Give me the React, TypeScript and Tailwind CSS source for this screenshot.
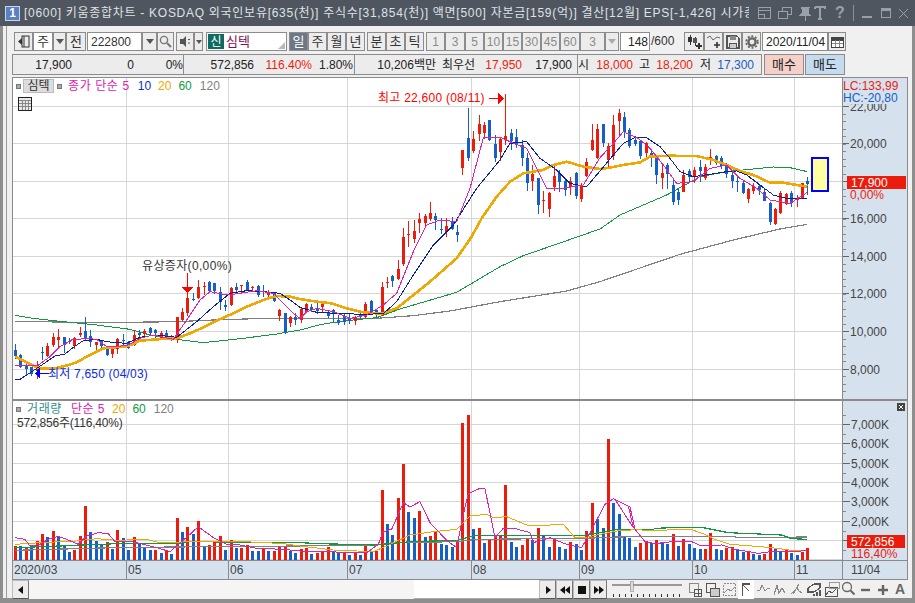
import React from "react";
import { twMerge } from "tailwind-merge";

type Candle = [number, number, number, number, number];
type P = [number, number];

const RED = "#ec1c0c";
const BLUE = "#1560c8";
const candleX = (i: number) => Math.round(15 + 5.39 * i);

// [red?, body top, body bottom, wick top, wick bottom], read off 3x crops
const c1: Candle[] = [
  [0,300,318,282,328],[0,315,350,312,355],[0,348,356,335,375],[0,352,372,352,378],[1,345,362,332,385],[0,305,308,292,332],
  [1,288,318,278,320],[1,262,285,248,290],[1,262,270,238,295],[0,262,285,262,310],[0,272,276,265,282],[1,265,288,262,298],
  [1,249,254,232,262],[0,243,268,200,270],[0,258,275,240,292],[1,277,286,277,300],[0,272,288,270,295],[0,295,315,290,318],
  [1,298,312,298,326],[1,268,298,265,312],[0,270,274,252,285],[0,278,292,272,295],[1,255,285,240,288],[0,250,256,240,270],
  [1,242,252,236,256],[0,235,250,232,258],[0,240,250,238,265],[1,248,262,242,268],[0,250,262,240,270],[1,257,264,255,272],
  [1,202,272,200,278],[1,185,210,173,213],[1,145,190,130,198],[0,146,150,130,155],[1,112,145,90,148],[1,108,112,95,135],
  [0,95,122,92,125],[0,100,125,98,132],[0,125,155,112,182],[0,165,170,150,182],[1,115,165,112,168],[0,110,118,100,132],
  [1,105,108,104,130],[0,95,120,90,122],[1,112,116,108,125],[0,108,135,105,140],[0,122,125,105,142],[1,125,135,120,145],
  [0,128,152,125,155],[1,180,198,178,215],[0,190,248,188,250],[1,200,218,198,230],[0,202,212,188,225],
];
const c2: Candle[] = [
  [1,672,705,668,712],[1,657,682,655,685],[0,665,675,658,682],[0,668,678,650,686],[1,656,665,650,682],[0,682,695,678,700],
  [0,675,687,672,710],[0,705,715,690,720],[0,692,710,686,720],[0,700,710,686,715],[1,695,708,692,720],[0,686,695,680,700],
  [1,657,695,650,698],[0,648,680,646,682],[0,676,692,672,698],[1,605,688,590,692],[1,591,594,575,607],[0,574,590,570,605],
  [1,552,582,525,585],[1,456,538,430,545],[1,447,450,408,485],[1,437,460,405,475],[1,402,415,385,445],[1,393,413,388,430],
  [1,383,400,350,408],[0,393,405,385,435],[0,432,435,398,445],[1,423,442,400,458],[0,408,432,395,435],[0,441,449,420,470],
  [1,195,250,195,270],[0,158,218,68,228],[1,162,197,138,205],[1,117,147,90,168],[1,120,143,110,160],[0,105,165,105,168],
  [0,177,218,150,230],[1,162,200,155,228],[1,154,165,28,180],[0,145,168,132,195],[0,157,180,132,188],[0,180,218,165,242],
  [0,220,296,205,318],[1,268,288,240,318],[0,278,360,278,387],[1,345,349,318,385],[1,323,370,320,395],[1,273,307,235,318],
  [0,265,292,255,320],[0,288,315,285,333],[1,288,305,275,330],[0,263,333,260,340],[1,303,342,295,352],[1,232,275,220,278],
  [1,165,195,118,198],[1,132,218,118,222],
  [0,118,175,118,188],[1,183,225,175,250],[1,120,212,90,225],[1,85,108,72,152],[0,95,140,80,158],[0,135,183,128,188],
  [0,165,178,152,182],[0,168,212,168,222],[1,175,205,170,218],[0,205,218,195,245],[0,215,270,212,295],[1,265,280,240,312],
  [0,240,268,235,312],[0,300,352,285,360],[0,322,345,310,360],[1,270,320,255,322],[0,258,275,252,295],[1,255,275,245,292],
  [0,245,258,225,290],[1,247,280,238,285],[1,216,222,192,240],[0,212,232,210,240],[0,220,245,212,250],[0,238,268,235,280],
  [0,270,288,262,310],[0,288,292,270,320],[0,295,325,285,328],[1,313,342,310,356],[1,303,318,295,328],[0,303,315,298,330],
  [0,320,347,310,350],[0,355,412,350,418],[1,372,418,370,420],[1,325,385,318,388],[1,327,357,325,360],[0,325,355,318,365],
  [1,343,346,330,365],[1,295,340,293,342],[0,288,296,275,328],
];
const candles: Candle[] = [
  ...c1.map((c) => c.map((v, i) => (i === 0 ? v : 250 + v / 3)) as Candle),
  ...c2.map((c) => c.map((v, i) => (i === 0 ? v : 85 + v / 3)) as Candle),
];

const vol3: [number, number][] = [
  [1,465],[0,465],[1,467],[0,465],[1,450],[1,430],[0,438],[1,420],[0,435],[0,463],[0,483],[1,477],[1,435],[1,345],[0,423],[0,450],[0,458],[1,453],
  [0,474],[1,417],[0,441],[0,477],[1,438],[0,458],[0,470],[0,477],[1,477],[0,485],[1,480],[0,489],[1,381],[0,423],[1,408],[0,429],[1,390],
  [0,467],[1,462],[1,450],[1,435],[0,477],[1,447],[0,471],[1,471],[1,462],[0,480],[0,480],[1,474],[0,480],[1,479],[1,465],[1,465],[0,480],[0,485],
];
const vol8: [number, number][] = [
  [1,445],[1,440],[0,458],[1,456],[1,452],[1,438],[0,452],[0,452],[1,452],[0,461],[1,455],[0,461],[1,435],[0,450],[1,450],[1,267],[0,369],[0,402],
  [1,291],[1,189],[0,333],[0,351],[1,330],[0,408],[1,405],[1,393],[0,429],[0,432],[0,438],[1,423],[1,66],[1,42],[0,384],[1,381],[0,426],[1,417],
  [1,405],[1,405],[1,252],[0,423],[0,438],[1,432],[1,414],[0,417],[1,381],[0,405],[0,438],[1,414],[0,438],[0,444],[1,423],[0,429],[0,447],[1,390],
  [1,306],[0,354],[0,381],[1,114],[0,306],[0,339],[0,408],[0,411],[0,438],
];
const vol4: [number, number][] = [
  [1,456],[1,450],[0,456],[1,447],[0,453],[0,459],[1,429],[0,465],[1,444],[0,459],[0,471],[0,474],[1,474],[1,426],[0,474],[0,477],[1,471],[1,468],
  [0,477],[0,483],[1,483],[0,489],[0,492],[1,489],[1,459],[0,471],[0,480],[1,478],[0,486],[0,492],[1,482],[1,471],
];
const volumes = [
  ...vol3.map(([c, y]) => [c, (507 - y) / 3]),
  ...vol8.map(([c, y]) => [c, (477 - y) / 3]),
  ...vol4.map(([c, y]) => [c, (507 - y) / 3]),
];

const pts = (ox: number, oy: number, a: P[]) => a.map(([x, y]) => `${ox + x / 3},${oy + y / 3}`).join(" ");
const Z5 = [0, 250] as const;
const Z6 = [300, 85] as const;
const Z7 = [600, 85] as const;
const Z3 = [0, 390] as const;
const Z8 = [300, 400] as const;
const Z4 = [615, 390] as const;

const line = (...parts: [readonly [number, number], P[]][]) => parts.map(([z, a]) => pts(z[0], z[1], a)).join(" ");

const ma5 = line(
  [Z5, [[46,345],[80,345],[115,345],[150,320],[180,290],[215,270],[260,265],[290,268],[320,290],[350,290],[385,285],[420,265],[460,255],[520,268],[560,210],[600,150],[630,125],[680,135],[720,130],[770,122],[820,130],[850,160],[880,190],[900,205]]],
  [Z6, [[20,680],[50,670],[100,680],[150,700],[200,690],[250,660],[290,625],[340,500],[380,420],[420,405],[470,410],[510,310],[550,158],[600,156],[640,175],[680,190],[710,250],[740,310],[790,310],[850,300],[900,218]]],
  [Z7, [[40,175],[70,140],[115,160],[150,190],[190,240],[230,295],[280,290],[330,250],[380,240],[420,280],[470,310],[510,345],[570,355],[622,322]]],
);
const ma10 = line(
  [Z5, [[46,388],[60,388],[85,372],[115,352],[140,335],[165,318],[195,312],[220,292],[250,272],[290,268],[320,275],[350,278],[380,280],[420,262],[470,255],[530,262],[590,215],[640,170],[690,130],[740,122],[790,125],[840,130],[870,150],[900,172]]],
  [Z6, [[50,682],[130,686],[190,688],[250,686],[290,650],[340,570],[400,480],[460,420],[530,310],[600,225],[630,175],[680,170],[720,220],[770,255],[810,295],[860,305],[900,258]]],
  [Z7, [[40,210],[70,175],[105,157],[140,158],[180,185],[210,220],[240,260],[280,275],[330,268],[380,260],[410,258],[440,270],[480,300],[520,330],[560,340],[622,340]]],
);
const ma20 = line(
  [Z5, [[46,320],[75,335],[105,350],[125,356],[160,356],[195,348],[230,337],[260,320],[290,305],[310,295],[345,292],[385,288],[420,272],[470,268],[530,265],[570,250],[610,232],[650,212],[700,190],[740,170],[790,150],[830,138],[870,140],[900,147]]],
  [Z6, [[50,650],[95,655],[140,670],[190,682],[245,686],[290,670],[340,630],[390,590],[470,520],[515,455],[545,400],[590,335],[630,290],[670,265],[730,255],[760,240],[800,230],[850,245],[900,252]]],
  [Z7, [[30,248],[70,240],[120,232],[150,215],[210,212],[250,213],[290,213],[340,225],[380,240],[420,258],[460,270],[510,293],[550,293],[590,300],[622,305]]],
);
const ma60 = line(
  [Z5, [[46,196],[100,205],[180,214],[290,225],[390,238],[450,255],[530,268],[610,278],[730,265],[830,252],[900,240]]],
  [Z6, [[65,718],[130,708],[230,698],[300,672],[470,622],[600,545],[670,512],[820,460],[900,432]]],
  [Z7, [[60,390],[200,330],[300,275],[380,260],[430,255],[520,246],[570,248],[622,260]]],
);
const ma120 = line(
  [Z5, [[46,214],[300,218],[530,215],[640,210],[800,205],[900,205]]],
  [Z6, [[230,700],[340,692],[450,678],[600,650],[800,618],[900,590]]],
  [Z7, [[240,508],[400,465],[540,432],[622,418]]],
);

const vm5 = line(
  [Z3, [[46,440],[75,445],[90,465],[120,460],[145,445],[175,436],[200,445],[235,460],[260,435],[295,425],[325,428],[345,452],[395,452],[430,460],[470,470],[510,482],[530,465],[570,430],[595,407],[640,440],[680,460],[720,462],[770,472],[850,475],[900,480]]],
  [Z8, [[60,452],[200,455],[235,430],[250,392],[275,385],[310,305],[330,318],[360,302],[390,365],[440,418],[470,440],[490,340],[505,278],[540,262],[555,263],[585,410],[610,382],[650,384],[690,395],[700,425],[750,410],[800,430],[845,440],[870,395],[915,310],[940,293],[985,315],[1000,380]]],
  [Z4, [[0,325],[45,348],[60,415],[90,452],[120,458],[170,452],[230,452],[260,465],[320,462],[360,475],[430,487],[480,480],[540,482],[577,478]]],
);
const vm20 = line(
  [Z3, [[46,460],[120,455],[230,450],[290,443],[350,448],[440,445],[480,455],[530,455],[570,450],[680,450],[800,455],[850,458],[900,465]]],
  [Z8, [[100,447],[220,452],[260,435],[330,402],[400,392],[470,385],[510,345],[560,340],[580,350],[620,347],[680,372],[750,372],[790,370],[825,410],[850,410],[950,390],[1020,385]]],
  [Z4, [[85,418],[230,416],[270,430],[300,445],[345,460],[410,465],[470,470],[530,478],[577,480]]],
);
const vm60 = line(
  [Z3, [[46,470],[230,463],[350,458],[530,458],[570,452],[900,455]]],
  [Z8, [[60,428],[220,432],[270,428],[330,422],[470,418],[530,403],[850,403],[950,386],[1020,385]]],
  [Z4, [[115,415],[120,412],[200,409],[265,410],[340,425],[500,432],[530,443],[577,445]]],
);
const vm120 = line(
  [Z3, [[46,478],[340,470],[520,468],[900,465]]],
  [Z8, [[230,432],[280,425],[470,422],[530,415],[850,412],[1020,406]]],
  [Z4, [[0,436],[360,436],[362,440],[577,438]]],
);

const V_GRID = [126, 228, 347, 471, 579, 692, 794];
const P_GRID = [106, 143, 181, 218, 256, 293, 331, 369];
const P_LABELS: [number, string][] = [[106,"22,000"],[143,"20,000"],[181,"18,000"],[218,"16,000"],[256,"14,000"],[293,"12,000"],[331,"10,000"],[369,"8,000"]];
const V_LABELS: [number, string][] = [[423,"7,000K"],[442,"6,000K"],[462,"5,000K"],[481,"4,000K"],[500,"3,000K"],[520,"2,000K"],[539,"1,000K"]];

function PriceChart() {
  return (
    <svg viewBox="13 78 829 321" className="block w-[829px] h-[321px] bg-white shrink-0" shapeRendering="crispEdges">
      {P_GRID.map((y) => <line key={y} x1="13" x2="842" y1={y + 0.5} y2={y + 0.5} stroke="#d6d6d6" />)}
      {V_GRID.map((x) => <line key={x} x1={x + 0.5} x2={x + 0.5} y1="78" y2="399" stroke="#d6d6d6" />)}
      <polyline points={ma120} fill="none" stroke="#808080" strokeWidth="1.2" />
      <polyline points={ma60} fill="none" stroke="#0f9a40" />
      {candles.map(([red, t, b, wt, wb], i) => {
        const x = candleX(i);
        const color = red ? RED : BLUE;
        return (
          <g key={i} fill={color}>
            <rect x={x} y={Math.round(wt)} width="1" height={Math.max(1, Math.round(wb - wt))} />
            <rect x={x - 1} y={Math.round(t)} width="3.4" height={Math.max(1, Math.round(b - t))} />
          </g>
        );
      })}
      <polyline points={ma20} fill="none" stroke="#f0a800" strokeWidth="2.6" />
      <polyline points={ma10} fill="none" stroke="#0a1f9c" />
      <polyline points={ma5} fill="none" stroke="#e020b0" />
      <rect x="812" y="158" width="16" height="33" fill="#ffffa0" stroke="#0000ff" strokeWidth="2" />
      {/* annotations */}
      <line x1="187.5" x2="187.5" y1="273" y2="288" stroke="#ff0000" />
      <polygon points="182,287 193,287 187.5,293" fill="#ff0000" />
      <text x="142" y="270" fontSize="12" fill="#333" className="tracking-[0.35px]">유상증자(0,00%)</text>
      <text x="378" y="102" fontSize="12" fill="#ff0000" className="tracking-[0.25px]">최고 22,600 (08/11)</text>
      <line x1="489" x2="498" y1="98.5" y2="98.5" stroke="#ff0000" />
      <polygon points="498,93 504,98.5 498,104" fill="#ff0000" />
      <line x1="35" x2="49" y1="373.5" y2="373.5" stroke="#0000ff" />
      <polygon points="35,373.5 40,367 40,379" fill="#0000ff" />
      <text x="48" y="378" fontSize="12" fill="#0a2be0" className="tracking-[0.2px]">최저 7,650 (04/03)</text>
    </svg>
  );
}

function VolumeChart() {
  return (
    <svg viewBox="13 400 829 159" className="block w-[829px] h-[159px] bg-white shrink-0" shapeRendering="crispEdges">
      {[423, 442, 462, 481, 500, 520, 539, 558].map((y) => <line key={y} x1="13" x2="842" y1={y + 0.5} y2={y + 0.5} stroke="#d6d6d6" />)}
      {V_GRID.map((x) => <line key={x} x1={x + 0.5} x2={x + 0.5} y1="400" y2="559" stroke="#d6d6d6" />)}
      {volumes.map(([red, h], i) => (
        <rect key={i} x={candleX(i) - 1} y={559 - Math.round(h)} width="3" height={Math.round(h)} fill={red ? RED : BLUE} />
      ))}
      <polyline points={vm120} fill="none" stroke="#808080" strokeWidth="1.2" />
      <polyline points={vm60} fill="none" stroke="#0f9a40" strokeWidth="1.2" />
      <polyline points={vm20} fill="none" stroke="#f0a800" />
      <polyline points={vm5} fill="none" stroke="#e020b0" />
    </svg>
  );
}

function PriceAxis() {
  const minor: number[] = [];
  for (let y = 106; y < 398; y += 7.5) minor.push(Math.round(y));
  return (
    <svg viewBox="843 78 64 321" className="block w-[64px] h-[321px]">
      {minor.map((y) => <line key={y} x1="843" x2="846" y1={y + 0.5} y2={y + 0.5} stroke="#8a8a8a" />)}
      {P_LABELS.map(([y, t]) => (
        <g key={t}>
          <line x1="843" x2="849" y1={y + 0.5} y2={y + 0.5} stroke="#666" />
          <text x="850" y={y + 5} fontSize="12" fill="#444">{t}</text>
        </g>
      ))}
      <rect x="843" y="78" width="64" height="26" fill="#d6e1ee" />
      <text x="843" y="90" fontSize="12" fill="#ee1c0c">LC:133,99</text>
      <text x="843" y="102" fontSize="12" fill="#1560c8">HC:-20,80</text>
      <rect x="847" y="176" width="59" height="13" fill="#ec1c0c" />
      <text x="851" y="187" fontSize="12" fill="#ffffff">17,900</text>
      <text x="850" y="199" fontSize="12" fill="#ec1c0c">0,00%</text>
    </svg>
  );
}

function VolumeAxis() {
  const mids = [414, 433, 452, 472, 491, 510, 530, 549];
  return (
    <svg viewBox="843 400 64 159" className="block w-[64px] h-[159px]">
      {mids.map((y) => <line key={y} x1="843" x2="846" y1={y + 0.5} y2={y + 0.5} stroke="#8a8a8a" />)}
      {V_LABELS.map(([y, t]) => (
        <g key={t}>
          <line x1="843" x2="850" y1={y + 0.5} y2={y + 0.5} stroke="#666" />
          <text x="851" y={y + 5} fontSize="12" fill="#444">{t}</text>
        </g>
      ))}
      <rect x="847" y="534" width="58" height="13" fill="#ec1c0c" />
      <text x="851" y="545" fontSize="12" fill="#ffffff">572,856</text>
      <text x="851" y="557" fontSize="12" fill="#ec1c0c">116,40%</text>
    </svg>
  );
}

const tb = "h-[19px] shrink-0 flex items-center justify-center border border-[#8c8c8c] bg-[#ececec] text-[13px] text-[#333]";
const numBtn = "text-[12px] text-[#8a8a8a]";

function Caret() {
  return <span className="w-0 h-0 border-x-[4px] border-x-transparent border-t-[5px] border-t-[#555]" />;
}

function Toolbar() {
  return (
    <div className="flex h-[19px] mt-[6px] pl-[2px] shrink-0">
      <div className={twMerge(tb, "w-[19px]")}>
        <svg width="13" height="13" viewBox="0 0 13 13"><rect x="5" y="1" width="7" height="11" fill="none" stroke="#333" /><path d="M1 6.5 5 3v7z" fill="#333" /><path d="M7 1v11" stroke="#333" /></svg>
      </div>
      <div className={twMerge(tb, "w-[20px] bg-white")}>주</div>
      <div className={twMerge(tb, "w-[13px]")}><Caret /></div>
      <div className={twMerge(tb, "w-[20px]")}>전</div>
      <div className={twMerge(tb, "w-[55px] ml-px bg-white justify-start pl-[3px] text-[12px]")}>222800</div>
      <div className={twMerge(tb, "w-[15px]")}><Caret /></div>
      <div className={twMerge(tb, "w-[17px]")}>
        <svg width="13" height="13" viewBox="0 0 13 13"><circle cx="5" cy="5" r="3.6" fill="none" stroke="#777" strokeWidth="1.4" /><path d="m8 8 4 4" stroke="#777" strokeWidth="2" /></svg>
      </div>
      <div className={twMerge(tb, "w-[18px] ml-[2px]")}>
        <svg width="13" height="13" viewBox="0 0 13 13"><path d="M1 4h3l3-3v11L4 9H1z" fill="#555" /><path d="M9 4.500h2M9 8h2" stroke="#555" /></svg>
      </div>
      <div className={twMerge(tb, "w-[9px]")}><span className="w-0 h-0 border-x-[3px] border-x-transparent border-t-[4px] border-t-[#555]" /></div>
      <div className={twMerge(tb, "w-[81px] ml-[3px] bg-white justify-start relative")}>
        <span className="ml-[1px] w-[16px] h-[15px] bg-[#0f6b62] text-white text-[12px] flex items-center justify-center">신</span>
        <span className="ml-[2px] text-[#80104f] text-[13px]">심텍</span>
        <span className="absolute right-[1px] bottom-[1px] w-0 h-0 border-l-[7px] border-l-transparent border-b-[7px] border-b-[#b8b8b8]" />
      </div>
      <div className={twMerge(tb, "w-[19px] ml-[2px] bg-[#6c7886] text-white")}>일</div>
      <div className={twMerge(tb, "w-[19px]")}>주</div>
      <div className={twMerge(tb, "w-[19px]")}>월</div>
      <div className={twMerge(tb, "w-[19px]")}>년</div>
      <div className={twMerge(tb, "w-[19px] ml-[2px]")}>분</div>
      <div className={twMerge(tb, "w-[19px]")}>초</div>
      <div className={twMerge(tb, "w-[19px]")}>틱</div>
      <div className={twMerge(tb, numBtn, "w-[19px] ml-[2px]")}>1</div>
      <div className={twMerge(tb, numBtn, "w-[20px]")}>3</div>
      <div className={twMerge(tb, numBtn, "w-[19px]")}>5</div>
      <div className={twMerge(tb, numBtn, "w-[19px]")}>10</div>
      <div className={twMerge(tb, numBtn, "w-[19px]")}>15</div>
      <div className={twMerge(tb, numBtn, "w-[19px]")}>30</div>
      <div className={twMerge(tb, numBtn, "w-[19px]")}>45</div>
      <div className={twMerge(tb, numBtn, "w-[20px]")}>60</div>
      <div className={twMerge(tb, numBtn, "w-[25px]")}>3</div>
      <div className={twMerge(tb, "w-[14px]")}><span className="w-0 h-0 border-x-[4px] border-x-transparent border-t-[5px] border-t-[#aaa]" /></div>
      <div className={twMerge(tb, "w-[30px] ml-px bg-white justify-end pr-[1px] text-[12px] text-[#222]")}>148</div>
      <span className="w-[34px] shrink-0 text-[12px] text-[#333] leading-[19px] pl-[1px]">/600</span>
      <div className={twMerge(tb, "w-[20px]")}>
        <svg width="15" height="15" viewBox="0 0 15 15" shapeRendering="crispEdges"><path d="M3 1v10M8 3v9" stroke="#333" /><rect x="1" y="3" width="4" height="5" fill="#333" /><rect x="6" y="4" width="4" height="5" fill="#555" /><path d="M9 12h6M12 9v6" stroke="#333" strokeWidth="1.6" /></svg>
      </div>
      <div className={twMerge(tb, "w-[19px]")}>
        <svg width="15" height="15" viewBox="0 0 15 15"><path d="M1 4l3-2 3 4 4-3 3 1" fill="none" stroke="#666" /><path d="M8 11h6M11 8v6" stroke="#333" strokeWidth="1.6" /></svg>
      </div>
      <div className={twMerge(tb, "w-[19px]")}>
        <svg width="14" height="14" viewBox="0 0 14 14" shapeRendering="crispEdges"><path d="M1 1h10l2 2v10H1z" fill="none" stroke="#555" strokeWidth="1.4" /><rect x="4" y="1" width="6" height="4" fill="#888" /><rect x="3.500" y="8" width="7" height="5" fill="#ccc" stroke="#555" /></svg>
      </div>
      <div className={twMerge(tb, "w-[19px]")}>
        <svg width="14" height="14" viewBox="0 0 14 14"><circle cx="7" cy="7" r="3.600" fill="none" stroke="#666" strokeWidth="2.400" /><circle cx="7" cy="7" r="5.800" fill="none" stroke="#666" strokeWidth="1.800" strokeDasharray="2 1.700" /></svg>
      </div>
      <div className={twMerge(tb, "w-[66px] ml-px bg-white justify-start pl-[3px] text-[12px] text-[#222]")}>2020/11/04</div>
      <div className={twMerge(tb, "w-[18px]")}>
        <svg width="13" height="12" viewBox="0 0 13 12" shapeRendering="crispEdges"><rect x="0.500" y="1.500" width="12" height="10" fill="#fff" stroke="#444" /><rect x="0.500" y="1.500" width="12" height="3" fill="#444" /><path d="M4.500 4v7M8.500 4v7M1 7.500h11" stroke="#888" /></svg>
      </div>
    </div>
  );
}

function Num({ className, children }: { className: string; children: React.ReactNode }) {
  return <span className={`shrink-0 text-right whitespace-nowrap ${className}`}>{children}</span>;
}

function QuoteBar() {
  const cell = "h-[21px] shrink-0 flex items-center border border-[#8c8c8c] bg-[#ececec] text-[12px] text-[#222]";
  return (
    <div className="flex h-[21px] mt-[3px] shrink-0">
      <div className={`${cell} w-[172px]`}>
        <Num className="w-[59px]">17,900</Num>
        <Num className="w-[62px]">0</Num>
        <Num className="w-[49px]">0%</Num>
      </div>
      <div className={`${cell} w-[171px] border-l-0`}>
        <Num className="w-[70px]">572,856</Num>
        <Num className="w-[58px] text-[#ee1c0c]">116.40%</Num>
        <Num className="w-[41px]">1.80%</Num>
      </div>
      <div className={`${cell} w-[223px] border-l-0`}>
        <Num className="w-[81px]">10,206백만</Num>
        <Num className="w-[39px]">최우선</Num>
        <Num className="w-[47px] text-[#ee1c0c]">17,950</Num>
        <Num className="w-[50px]">17,900</Num>
      </div>
      <div className={`${cell} w-[184px] border-l-0`}>
        <Num className="w-[10px]">시</Num>
        <Num className="w-[45px] text-[#ee1c0c]">18,000</Num>
        <Num className="w-[17px]">고</Num>
        <Num className="w-[43px] text-[#ee1c0c]">18,200</Num>
        <Num className="w-[18px]">저</Num>
        <Num className="w-[43px] text-[#1560c8]">17,300</Num>
      </div>
      <div className="w-[40px] ml-[2px] shrink-0 flex items-center justify-center border border-[#8c8c8c] bg-[#f5d0c8] text-[13px] text-[#222]">매수</div>
      <div className="w-[40px] ml-px shrink-0 flex items-center justify-center border border-[#8c8c8c] bg-[#c5dcf0] text-[13px] text-[#222]">매도</div>
    </div>
  );
}

function DateAxis() {
  return (
    <div className="flex h-[19px] shrink-0 bg-[#d6e1ee] border-t border-[#8a8a8a] text-[12px] text-[#444] leading-[18px]">
      <span className="w-[113px] shrink-0 pl-[1px]">2020/03</span>
      <span className="w-[102px] shrink-0 pl-[1px] border-l border-[#8a8a8a]">05</span>
      <span className="w-[119px] shrink-0 pl-[1px] border-l border-[#8a8a8a]">06</span>
      <span className="w-[124px] shrink-0 pl-[1px] border-l border-[#8a8a8a]">07</span>
      <span className="w-[108px] shrink-0 pl-[1px] border-l border-[#8a8a8a]">08</span>
      <span className="w-[113px] shrink-0 pl-[1px] border-l border-[#8a8a8a]">09</span>
      <span className="w-[102px] shrink-0 pl-[1px] border-l border-[#8a8a8a]">10</span>
      <span className="w-[48px] shrink-0 pl-[1px] border-l border-[#8a8a8a]">11</span>
      <span className="flex-1 pl-[8px] border-l border-[#8a8a8a]">11/04</span>
    </div>
  );
}

const stepBtn = "w-[17px] h-[19px] shrink-0 flex items-center justify-center bg-[#ececec] border border-[#bbb] border-r-[#777] border-b-[#555]";

function BottomBar() {
  return (
    <div className="flex h-[19px] shrink-0 items-center">
      <div className={stepBtn}><svg width="6" height="8" viewBox="0 0 6 8"><path d="M5 0v8L0 4z" fill="#111" /></svg></div>
      <div className="w-[385px] h-[19px] shrink-0 bg-[#f5f5f5]" />
      <div className="w-[125px] h-[19px] shrink-0 bg-white border-b border-[#aaa]" />
      <div className={stepBtn}><svg width="6" height="8" viewBox="0 0 6 8"><path d="M1 0v8l5-4z" fill="#111" /></svg></div>
      <div className={stepBtn}><svg width="10" height="8" viewBox="0 0 10 8"><path d="M5 0v8L0 4zM10 0v8L5 4z" fill="#111" /></svg></div>
      <div className={stepBtn}><svg width="8" height="8" viewBox="0 0 8 8"><rect width="8" height="8" fill="#111" /></svg></div>
      <div className={stepBtn}><svg width="10" height="8" viewBox="0 0 10 8"><path d="M0 0v8l5-4zM5 0v8l5-4z" fill="#111" /></svg></div>
      <svg width="74" height="19" viewBox="0 0 74 19" className="ml-[3px] shrink-0" shapeRendering="crispEdges">
        <rect x="2" y="4" width="70" height="2" fill="#999" />
        <rect x="20" y="1" width="3" height="10" fill="#ddd" stroke="#888" strokeWidth="0.600" />
        {[3, 9, 15, 21, 27, 33, 39, 45, 51, 57, 63, 69].map((x) => <rect key={x} x={x} y="14" width="1" height="3" fill="#333" />)}
      </svg>
      <svg width="223" height="19" viewBox="0 0 223 19" className="ml-[2px] shrink-0" fill="none" stroke="#8a8a8a">
        <g transform="translate(2 0)">
          <g shapeRendering="crispEdges">
            <rect x="1.500" y="3.500" width="9" height="9" />
            <rect x="6.500" y="9.500" width="7" height="7" fill="#f0f0f0" stroke="#555" />
            <path d="M10 9.500v7M7 13h6" stroke="#555" />
            <rect x="18.500" y="3.500" width="9" height="9" stroke="#555" />
            <rect x="22.500" y="8.500" width="9" height="8" fill="#ccc" stroke="#555" />
            <rect x="35.500" y="3.500" width="12" height="12" strokeDasharray="2 1" />
            <path d="M36 13l4-4 3 2 4-4" />
            <rect x="50" y="0" width="16" height="19" fill="#fff" stroke="none" />
            <path d="M54.500 3v13M54 4h8M55 5l6 6" stroke="#555" strokeWidth="1.400" />
            <path d="M69 11l3-1 2-5 3 6 3-3 2 1" strokeWidth="1.200" />
            <path d="M86 15l3-10 2 8 3-5 3 5" strokeWidth="1.200" />
            <path d="M103 14l6-6 2 3 3 2M105 14l6-10" strokeWidth="1.200" />
            <path d="M120 8l6-4h6v4l-6 4h-6zM132 10v6M129 12v4M126 14v2" strokeWidth="1.200" stroke="#555" />
            <rect x="137.500" y="7.500" width="12" height="9" stroke="#555" />
            <rect x="141.500" y="2.500" width="10" height="6" stroke="#999" />
            <path d="M138 15l3-4 3 2 4-4" stroke="#555" />
          </g>
          <circle cx="159" cy="7" r="4.500" stroke="#666" strokeWidth="1.300" />
          <path d="m162.500 10.500 4 4" stroke="#666" strokeWidth="2" />
          <path d="M173 10h9" stroke="#666" strokeWidth="2.400" />
          <path d="M190 10h10M195 5v10" stroke="#666" strokeWidth="2.400" />
        </g>
      </svg>
      <span className="text-[14px] font-bold text-[#666] -ml-[14px]">A</span>
    </div>
  );
}

function TitleIcons() {
  return (
    <div className="ml-auto flex items-center shrink-0 pr-[7px]">
      <svg width="147" height="18" viewBox="0 0 147 18" fill="none" stroke="#9aa0a6" shapeRendering="crispEdges">
        <rect x="1.500" y="3.500" width="12" height="11" strokeWidth="1.200" />
        <path d="M2 6.500h11M2 10.500h5v4" />
        <rect x="25.500" y="3.500" width="9" height="7" />
        <rect x="21.500" y="7.500" width="9" height="7" fill="#50565f" />
        <path d="M44 3h8v1l-1 1v4l2 2H43l2-2V5l-1-1zM48 11v6" fill="#9aa0a6" />
        <path d="M58 3h10v2M58 5V3M63 3v12M61 15h4" strokeWidth="1.800" />
      </svg>
      <span className="-ml-[74px] w-[20px] text-center text-[16px] font-bold text-[#9aa0a6] leading-none">?</span>
      <span className="ml-[3px] w-px h-[16px] bg-[#8a9096]" />
      <span className="ml-[8px] w-[10px] h-[2px] mt-[8px] bg-[#9aa0a6]" />
      <span className="ml-[9px] w-[10px] h-[10px] border border-t-[3px] border-[#9aa0a6]" />
      <svg width="9" height="9" viewBox="0 0 9 9" className="ml-[8px]"><path d="M0 0l9 9M9 0l-9 9" stroke="#9aa0a6" /></svg>
    </div>
  );
}

export default function App() {
  return (
    <div className="w-[915px] h-[603px] flex flex-col overflow-hidden bg-[#f0f0f0] font-['Liberation_Sans','Noto_Sans_CJK_KR',sans-serif]">
      <div className="h-[26px] shrink-0 flex items-center bg-[#50565f] pl-[5px]">
        <span className="w-[15px] h-[15px] shrink-0 flex items-center justify-center bg-[#5a80c0] border border-[#c8d4ea] text-white text-[12px] font-bold">1</span>
        <div className="ml-[4px] w-[725px] shrink-0 overflow-hidden whitespace-nowrap text-[12px] tracking-[0.72px] text-[#dfe2e6]">
          [0600] 키움종합차트 - KOSDAQ 외국인보유[635(천)] 주식수[31,854(천)] 액면[500] 자본금[159(억)] 결산[12월] EPS[-1,426] 시가총
        </div>
        <TitleIcons />
      </div>
      <div className="flex-1 min-h-0 flex border-x-[3px] border-b-[5px] border-[#8e8e8e] pl-[3px]">
        <div className="flex-1 min-w-0 flex flex-col border-l border-[#9a9a9a] pl-[5px]">
          <Toolbar />
          <QuoteBar />
          <div className="w-[896px] mt-[2px] shrink-0 border border-[#8a8a8a] flex flex-col">
            <div className="flex h-[321px] relative">
              <PriceChart />
              <div className="border-l border-[#8a8a8a] bg-[#d6e1ee]"><PriceAxis /></div>
              <div className="absolute left-[3px] top-[1px] flex items-center text-[12px] leading-[14px] whitespace-nowrap">
                <span className="w-[5px] h-[5px] bg-[#aaa] border border-[#777]" />
                <span className="ml-[2px] w-[31px] h-[14px] flex items-center justify-center bg-[#dddddd] border border-[#bbb] text-[#333]">심텍</span>
                <span className="ml-[3px] w-[5px] h-[5px] bg-[#aaa] border border-[#777]" />
                <span className="ml-[6px] text-[#e020b0] tracking-[0.6px]">종가 단순 5</span>
                <span className="ml-[8px] text-[#0a30c0]">10</span>
                <span className="ml-[7px] text-[#f0a800]">20</span>
                <span className="ml-[7px] text-[#0f9a40]">60</span>
                <span className="ml-[8px] text-[#808080]">120</span>
              </div>
              <svg width="14" height="14" viewBox="0 0 14 14" className="absolute left-[5px] top-[19px]" shapeRendering="crispEdges">
                <rect x="0.500" y="0.500" width="13" height="13" fill="#e8e8e8" stroke="#222" />
                <path d="M1 3.500h12M1 6.500h12M1 9.500h12M4.500 3v10M7.500 3v10M10.500 3v10" stroke="#888" />
              </svg>
            </div>
            <div className="flex h-[2px] bg-[#8a8a8a]" />
            <div className="flex h-[159px] relative">
              <VolumeChart />
              <div className="border-l border-[#8a8a8a] bg-[#d6e1ee]"><VolumeAxis /></div>
              <div className="absolute left-[3px] top-[1px] text-[12px] leading-[14px] whitespace-nowrap">
                <div className="flex items-center">
                  <span className="w-[5px] h-[5px] bg-[#aaa] border border-[#777]" />
                  <span className="ml-[6px] text-[#2f8f8f] tracking-[0.6px]">거래량</span>
                  <span className="ml-[9px] text-[#e020b0] tracking-[0.5px]">단순 5</span>
                  <span className="ml-[7px] text-[#f0a800]">20</span>
                  <span className="ml-[7px] text-[#0f9a40]">60</span>
                  <span className="ml-[8px] text-[#808080]">120</span>
                </div>
                <div className="ml-[1px] text-[#333] tracking-[-0.2px]">572,856주(116,40%)</div>
              </div>
              <span className="absolute right-[2px] top-[2px] w-[8px] h-[8px] bg-[#444] flex items-center justify-center">
                <svg width="6" height="6" viewBox="0 0 6 6"><path d="M1 1l4 4M5 1l-4 4" stroke="#fff" /></svg>
              </span>
            </div>
            <DateAxis />
          </div>
          <BottomBar />
        </div>
      </div>
    </div>
  );
}
